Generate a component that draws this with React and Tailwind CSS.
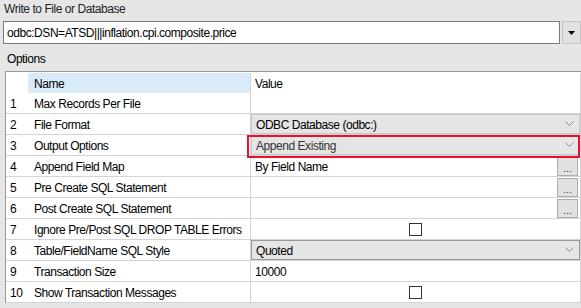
import React from 'react';

const rows = [
  { n: 1, name: 'Max Records Per File', kind: 'text', value: '' },
  { n: 2, name: 'File Format', kind: 'combo', value: 'ODBC Database (odbc:)' },
  { n: 3, name: 'Output Options', kind: 'combo', value: 'Append Existing', dim: true },
  { n: 4, name: 'Append Field Map', kind: 'button', value: 'By Field Name' },
  { n: 5, name: 'Pre Create SQL Statement', kind: 'button', value: '' },
  { n: 6, name: 'Post Create SQL Statement', kind: 'button', value: '' },
  { n: 7, name: 'Ignore Pre/Post SQL DROP TABLE Errors', kind: 'check' },
  { n: 8, name: 'Table/FieldName SQL Style', kind: 'combo', value: 'Quoted', dark: true },
  { n: 9, name: 'Transaction Size', kind: 'text', value: '10000' },
  { n: 10, name: 'Show Transaction Messages', kind: 'check' },
];

const Chevron = () => (
  <svg width="9" height="6" viewBox="0 0 9 6" className="shrink-0">
    <path d="M0.5 0.5 L4.5 4.5 L8.5 0.5" fill="none" stroke="#8a8a8a" strokeWidth="1" />
  </svg>
);

const ValueCell = ({ row }) => {
  if (row.kind === 'combo') {
    return (
      <div
        className={`h-full flex items-center justify-between pl-[4px] pr-[5px] bg-[#e5e5e5] border ${
          row.dark ? 'border-[#9a9a9a]' : 'border-[#c8c8c8]'
        } ${row.dim ? 'text-[#333]' : 'text-black'}`}
      >
        <span className="pt-[1px]">{row.value}</span>
        <Chevron />
      </div>
    );
  }
  if (row.kind === 'button') {
    return (
      <div className="h-full flex items-center justify-between pl-[4px]">
        <span className="pt-[2px]">{row.value}</span>
        <div className="w-[21px] h-[19px] mr-[2px] bg-[#e1e1e1] border border-[#adadad] flex items-end justify-center text-[#5a1a7a] leading-[14px] text-[11px] tracking-normal">
          ...
        </div>
      </div>
    );
  }
  if (row.kind === 'check') {
    return (
      <div className="h-full flex items-center justify-center">
        <div className="w-[13px] h-[13px] border border-[#333] bg-white" />
      </div>
    );
  }
  return <div className="h-full flex items-center pl-[4px] pt-[2px]">{row.value}</div>;
};

export default function App() {
  return (
    <div
      className="relative w-[581px] h-[308px] bg-[#e6e6e6] text-[12px] tracking-[-0.45px] text-black overflow-hidden"
      style={{ fontFamily: '"Liberation Sans", Arial, sans-serif' }}
    >
      {/* Header label */}
      <div className="h-[21px] pl-[4px] pt-[1px] leading-[16px] text-[#222]">Write to File or Database</div>

      {/* Path input */}
      <div className="flex h-[23px] pl-[3px] gap-[2px]">
        <div className="w-[558px] h-full bg-white border border-[#7a7a7a] flex items-center pl-[3px] pt-[1px]">
          odbc:DSN=ATSD|||inflation.cpi.composite.price
        </div>
        <div className="w-[19px] h-full bg-[#e1e1e1] border border-[#c4c4c4] flex items-center justify-center">
          <svg width="7" height="4" viewBox="0 0 7 4">
            <path d="M0 0 H7 L3.5 4 Z" fill="#000" />
          </svg>
        </div>
      </div>

      {/* Options label */}
      <div className="h-[27px] pl-[7px] pt-[7px] leading-[16px]">Options</div>

      {/* Options grid */}
      <div className="ml-[5px] w-[576px] border-l border-t border-[#9a9a9a] bg-white">
        <div className="flex h-[21px] border-t border-white">
          <div className="w-[22px]" />
          <div className="w-[223px] bg-[#d9eaf8] border-r border-[#d4d4d4] flex items-center pl-[6px] pt-[2px]">Name</div>
          <div className="flex-1 flex items-center pl-[4px] pt-[2px] border-r border-[#d4d4d4]">Value</div>
        </div>
        {rows.map((row) => (
          <div key={row.n} className="flex h-[21px] border-b border-[#d4d4d4]">
            <div className="w-[22px] flex items-center pl-[4px] pt-[2px]">{row.n}</div>
            <div className="w-[223px] border-r border-[#d4d4d4] flex items-center pl-[6px] pt-[2px] whitespace-nowrap">
              {row.name}
            </div>
            <div className="flex-1 border-r border-[#d4d4d4] whitespace-nowrap">
              <ValueCell row={row} />
            </div>
          </div>
        ))}
      </div>

      {/* Highlight annotation */}
      <div className="absolute left-[247px] top-[135px] w-[333px] h-[23px] border-2 border-[#e8112d] pointer-events-none" />
    </div>
  );
}
